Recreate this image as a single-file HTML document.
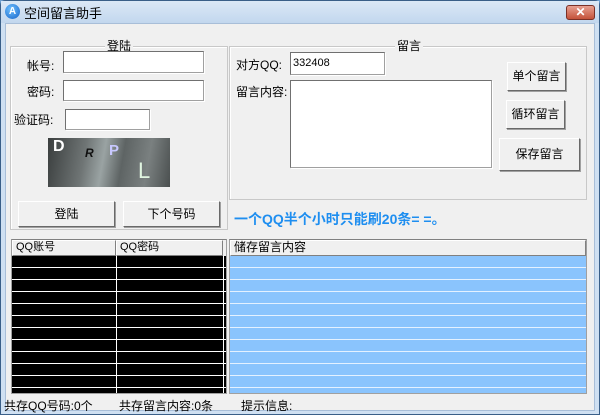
<!DOCTYPE html>
<html><head><meta charset="utf-8"><style>
*{margin:0;padding:0;box-sizing:border-box}
body{width:600px;height:415px;background:#6f9fd0;font:12px "Liberation Sans","Noto Sans CJK SC",sans-serif;color:#000;position:relative;overflow:hidden}
.a{position:absolute}
.win{left:0;top:0;width:600px;height:415px;background:#cfe0f2;border:1px solid #3a5f88;border-radius:5px 5px 0 0}
.title{left:1px;top:1px;width:598px;height:22px;background:linear-gradient(#dbe8f6,#c2d7ee)}
.client{left:5px;top:23px;width:590px;height:388px;background:#f0f0f0;border:1px solid #a8bed8}
.grp{border:1px solid #c8c8c8;box-shadow:inset 1px 1px 0 #fff}
.lg{background:#f0f0f0;padding:0 2px;line-height:12px}
.in{background:#fff;border:1px solid #a0a0a0;border-top-color:#707070;border-left-color:#707070;box-shadow:1px 1px 0 #fff}
.btn{background:#f0f0f0;border:1px solid #fff;border-right-color:#696969;border-bottom-color:#696969;box-shadow:1px 1px 0 #a0a0a0;text-align:center}
.hd{background:#f0f0f0;border:1px solid #fff;border-right-color:#808080;border-bottom-color:#808080;font-size:11px;line-height:13px;padding-left:3px}
</style></head><body>
<div class="a win"></div>
<div class="a title"></div>
<div class="a" style="left:5px;top:4px;width:15px;height:15px;border-radius:50%;background:radial-gradient(circle at 40% 35%,#6ec0ff,#1563c8);color:#fff;font-size:10px;line-height:15px;text-align:center;font-weight:bold">A</div>
<div class="a" style="left:24px;top:3px;font-size:13px">空间留言助手</div>
<div class="a" style="left:566px;top:5px;width:29px;height:15px;border-radius:3px;background:linear-gradient(#e8a090,#c4523a);border:1px solid #7a3026;color:#fff;font-weight:bold;text-align:center;line-height:13px;font-size:12px">✕</div>
<div class="a client"></div>

<div class="a grp" style="left:10px;top:46px;width:218px;height:184px"></div>
<div class="a lg" style="left:105px;top:40px">登陆</div>
<div class="a" style="left:27px;top:57px">帐号:</div>
<div class="a in" style="left:63px;top:51px;width:141px;height:22px"></div>
<div class="a" style="left:27px;top:83px">密码:</div>
<div class="a in" style="left:63px;top:80px;width:141px;height:21px"></div>
<div class="a" style="left:14px;top:111px">验证码:</div>
<div class="a in" style="left:65px;top:109px;width:85px;height:21px"></div>
<div class="a" style="left:48px;top:138px;width:122px;height:49px;background:linear-gradient(100deg,#3a3e3e,#6f7575 30%,#9aa3a3 45%,#5e6464 60%,#7a8080 80%,#4a4f4f)"></div>
<div class="a" style="left:53px;top:138px;color:#fff;font-weight:bold;font-size:16px">D</div>
<div class="a" style="left:85px;top:146px;color:#111;font-weight:bold;font-size:12px;font-style:italic">R</div>
<div class="a" style="left:109px;top:142px;color:#c8c8ff;font-weight:bold;font-size:15px">P</div>
<div class="a" style="left:138px;top:158px;color:#e0f5e0;font-size:22px">L</div>
<div class="a btn" style="left:18px;top:201px;width:97px;height:26px;line-height:24px">登陆</div>
<div class="a btn" style="left:123px;top:201px;width:97px;height:26px;line-height:24px">下个号码</div>

<div class="a grp" style="left:229px;top:46px;width:358px;height:154px"></div>
<div class="a lg" style="left:395px;top:40px">留言</div>
<div class="a" style="left:236px;top:56px">对方QQ:</div>
<div class="a in" style="left:290px;top:52px;width:95px;height:23px;padding:4px 2px;font-size:11px">332408</div>
<div class="a" style="left:236px;top:83px">留言内容:</div>
<div class="a in" style="left:290px;top:80px;width:202px;height:88px"></div>
<div class="a btn" style="left:507px;top:62px;width:59px;height:29px;line-height:27px">单个留言</div>
<div class="a btn" style="left:506px;top:100px;width:59px;height:29px;line-height:27px">循环留言</div>
<div class="a btn" style="left:499px;top:138px;width:81px;height:33px;line-height:31px">保存留言</div>
<div class="a" style="left:234px;top:209px;color:#1e8ef0;font-weight:bold;font-size:14px">一个QQ半个小时只能刷20条= =。</div>

<div class="a" style="left:11px;top:239px;width:216px;height:155px;border:1px solid #a0a0a0;border-top-color:#808080;background:repeating-linear-gradient(#000 0 11px,#fff 11px 12px);background-position:0 4px;background-color:#000"></div>
<div class="a" style="left:12px;top:240px;width:214px;height:16px;background:#f0f0f0"></div>
<div class="a hd" style="left:12px;top:240px;width:104px;height:16px">QQ账号</div>
<div class="a hd" style="left:116px;top:240px;width:107px;height:16px">QQ密码</div>
<div class="a" style="left:116px;top:256px;width:1px;height:137px;background:#fff"></div>
<div class="a" style="left:223px;top:256px;width:1px;height:137px;background:#fff"></div>

<div class="a" style="left:229px;top:239px;width:358px;height:155px;border:1px solid #a0a0a0;border-top-color:#808080;background:repeating-linear-gradient(#8ac4fd 0 11px,#e4f1ff 11px 12px);background-position:0 4px;background-color:#8ac4fd"></div>
<div class="a hd" style="left:230px;top:240px;width:356px;height:16px;font-size:12px">储存留言内容</div>

<div class="a" style="left:4px;top:397px;font-size:12px">共存QQ号码:0个</div>
<div class="a" style="left:119px;top:397px;font-size:12px">共存留言内容:0条</div>
<div class="a" style="left:241px;top:397px;font-size:12px">提示信息:</div>
</body></html>
